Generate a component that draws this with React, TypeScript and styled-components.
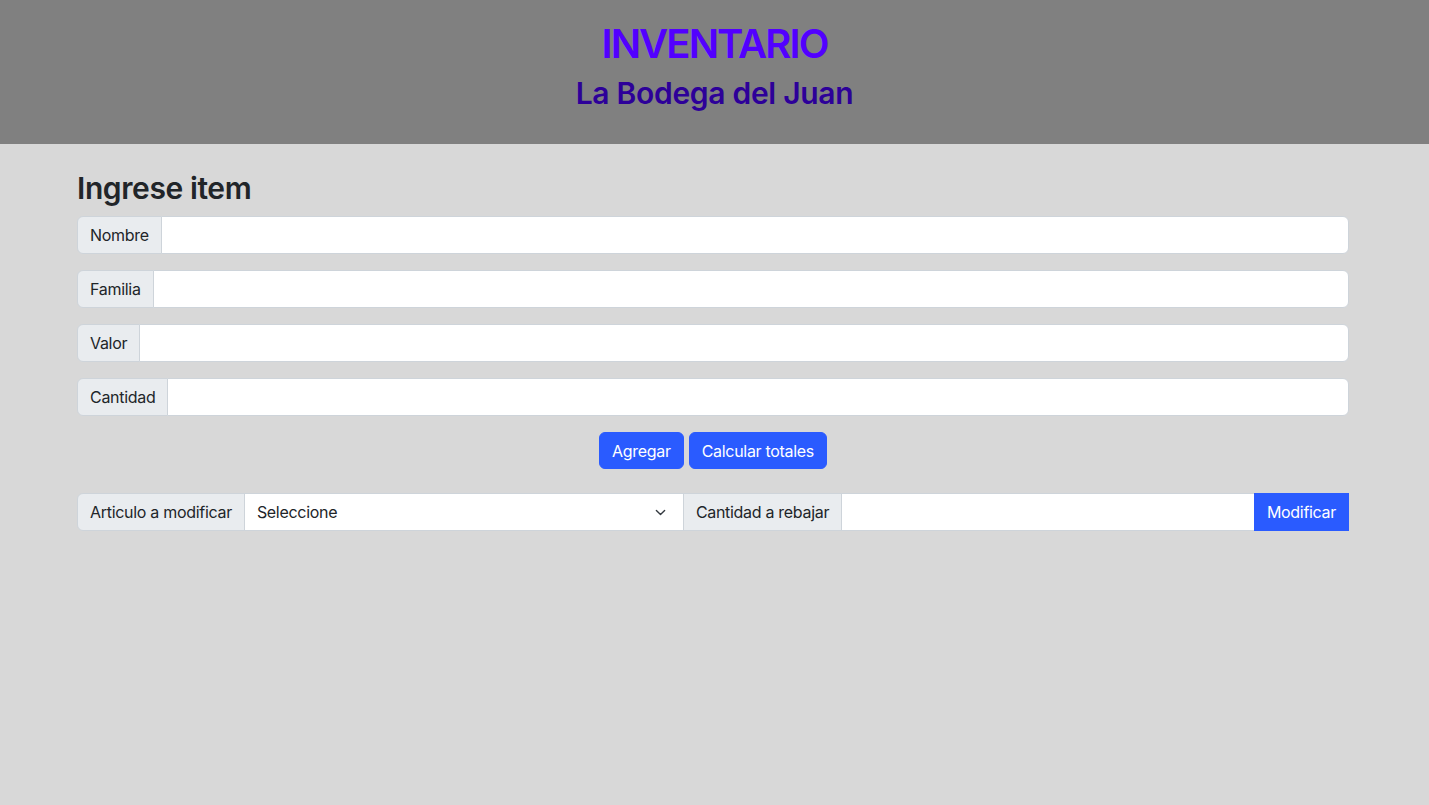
import React from 'react';
import styled, { createGlobalStyle } from 'styled-components';

const GlobalStyle = createGlobalStyle`
  html, body {
    margin: 0;
    padding: 0;
    background: #d8d8d8;
    font-family: Inter, "Noto Sans", "Liberation Sans", sans-serif;
    color: #212529;
    letter-spacing: -0.3px;
  }
  * { box-sizing: border-box; }
`;

const Header = styled.header`
  background: #808080;
  height: 144px;
  padding-top: 20px;
  text-align: center;
`;

const Title = styled.h1`
  margin: 0 0 7px;
  font-size: 40px;
  line-height: 1.2;
  font-weight: 600;
  letter-spacing: -1.9px;
  color: #5200ff;
`;

const Subtitle = styled.h2`
  margin: 0;
  font-size: 30px;
  line-height: 1.2;
  font-weight: 600;
  letter-spacing: -0.3px;
  color: #2d0099;
`;

const Main = styled.main`
  width: 1272px;
  margin-left: 77px;
  padding-top: 26px;
`;

const SectionTitle = styled.h3`
  margin: 0 0 10px;
  font-size: 30px;
  line-height: 1.2;
  font-weight: 600;
  letter-spacing: -0.4px;
`;

const Group = styled.div`
  display: flex;
  align-items: stretch;
  height: 38px;
  margin-bottom: 16px;
`;

const Addon = styled.span<{ $first?: boolean }>`
  display: flex;
  align-items: center;
  padding: 0 12px;
  font-size: 16px;
  white-space: nowrap;
  background: #e9ecef;
  border: 1px solid #ced4da;
  border-radius: ${p => (p.$first ? '6px 0 0 6px' : '0')};
  margin-left: ${p => (p.$first ? '0' : '-1px')};
`;

const Input = styled.input<{ $last?: boolean }>`
  flex: 1;
  min-width: 0;
  margin-left: -1px;
  padding: 0 12px;
  font: inherit;
  font-size: 16px;
  background: #fff;
  border: 1px solid #ced4da;
  border-radius: ${p => (p.$last ? '0 6px 6px 0' : '0')};
  outline: none;
`;

const Select = styled.select`
  width: 440px;
  margin-left: -1px;
  padding: 0 36px 0 12px;
  font: inherit;
  font-size: 16px;
  letter-spacing: -0.3px;
  color: #212529;
  background-color: #fff;
  background-image: url("data:image/svg+xml,%3csvg xmlns='http://www.w3.org/2000/svg' viewBox='0 0 16 16'%3e%3cpath fill='none' stroke='%23343a40' stroke-linecap='round' stroke-linejoin='round' stroke-width='2' d='m2 5 6 6 6-6'/%3e%3c/svg%3e");
  background-repeat: no-repeat;
  background-position: right 16px center;
  background-size: 13px 11px;
  border: 1px solid #ced4da;
  border-radius: 0;
  appearance: none;
  outline: none;
`;

const Actions = styled.div`
  display: flex;
  justify-content: center;
  gap: 5px;
  margin-bottom: 24px;
`;

const Button = styled.button<{ $square?: boolean }>`
  height: ${p => (p.$square ? 'auto' : '37px')};
  padding: 0 12px;
  font: inherit;
  font-size: 16px;
  letter-spacing: -0.3px;
  color: #fff;
  background: #2a5bff;
  border: 1px solid #2a5bff;
  border-radius: ${p => (p.$square ? '0' : '6px')};
  margin-left: ${p => (p.$square ? '-1px' : '0')};
  cursor: pointer;
`;

const fields = ['Nombre', 'Familia', 'Valor', 'Cantidad'];

export default function App() {
  return (
    <>
      <GlobalStyle />
      <Header>
        <Title>INVENTARIO</Title>
        <Subtitle>La Bodega del Juan</Subtitle>
      </Header>
      <Main>
        <SectionTitle>Ingrese item</SectionTitle>
        {fields.map(f => (
          <Group key={f}>
            <Addon $first>{f}</Addon>
            <Input $last />
          </Group>
        ))}
        <Actions>
          <Button>Agregar</Button>
          <Button>Calcular totales</Button>
        </Actions>
        <Group>
          <Addon $first>Articulo a modificar</Addon>
          <Select defaultValue="">
            <option value="">Seleccione</option>
          </Select>
          <Addon>Cantidad a rebajar</Addon>
          <Input />
          <Button $square>Modificar</Button>
        </Group>
      </Main>
    </>
  );
}
